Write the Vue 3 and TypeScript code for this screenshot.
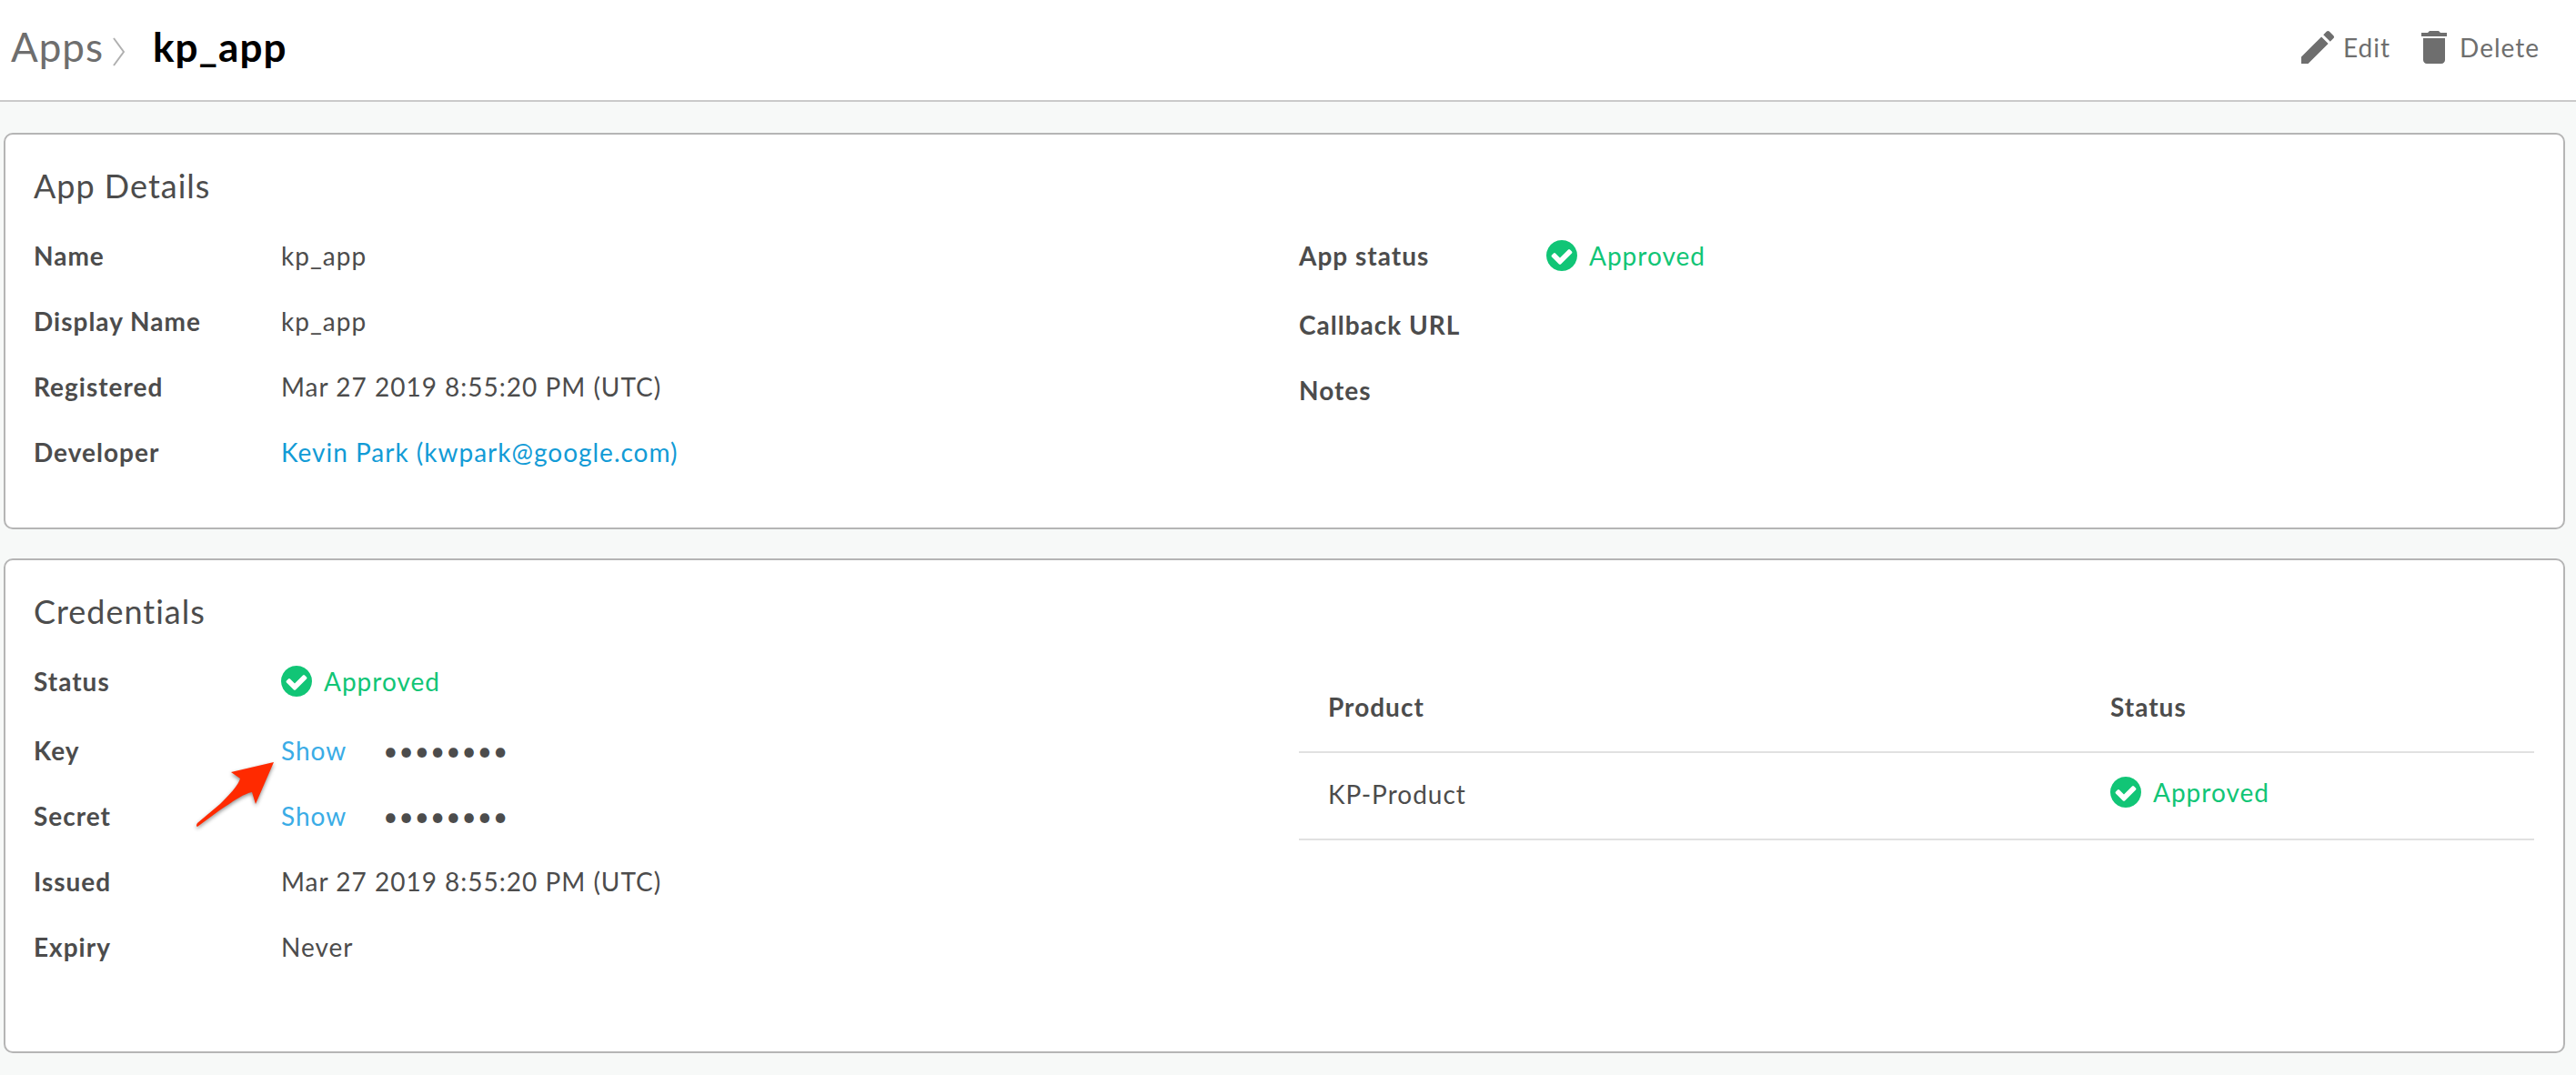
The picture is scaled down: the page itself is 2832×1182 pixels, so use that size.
<script setup lang="ts">
type Kind = 'text' | 'link' | 'status' | 'secret'

interface Field {
  label: string
  value?: string
  kind?: Kind
  pointer?: boolean
}

interface Product {
  name: string
  status: string
}

const appName = 'kp_app'

const detailsLeft: Field[] = [
  { label: 'Name', value: 'kp_app' },
  { label: 'Display Name', value: 'kp_app' },
  { label: 'Registered', value: 'Mar 27 2019 8:55:20 PM (UTC)' },
  { label: 'Developer', value: 'Kevin Park (kwpark@google.com)', kind: 'link' },
]

const detailsRight: Field[] = [
  { label: 'App status', value: 'Approved', kind: 'status' },
  { label: 'Callback URL' },
  { label: 'Notes' },
]

const credentials: Field[] = [
  { label: 'Status', value: 'Approved', kind: 'status' },
  { label: 'Key', value: '••••••••', kind: 'secret', pointer: true },
  { label: 'Secret', value: '••••••••', kind: 'secret' },
  { label: 'Issued', value: 'Mar 27 2019 8:55:20 PM (UTC)' },
  { label: 'Expiry', value: 'Never' },
]

const products: Product[] = [{ name: 'KP-Product', status: 'Approved' }]

const cards = [
  { title: 'App Details', columns: [detailsLeft, detailsRight], products: null },
  { title: 'Credentials', columns: [credentials], products },
]

const checkPath =
  'M1284 606q0-28-18-46l-91-90q-19-19-45-19t-45 19l-408 407-226-226q-19-19-45-19t-45 19l-91 90q-18 18-18 46 0 27 18 45l362 362q19 19 45 19 27 0 46-19l543-543q18-18 18-45zm252 162q0 209-103 385.5t-279.5 279.5-385.5 103-385.5-103-279.5-279.5-103-385.5 103-385.5 279.5-279.5 385.5-103 385.5 103 279.5 279.5 103 385.5z'
</script>

<template>
  <div class="page">
    <header class="topbar">
      <nav class="crumbs" aria-label="Breadcrumb">
        <a class="crumb" href="#apps">Apps</a>
        <svg class="chevron" viewBox="0 0 14 32" aria-hidden="true">
          <path d="M1 1 L12 16 L1 31" />
        </svg>
        <h1 class="current">{{ appName }}</h1>
      </nav>
      <div class="actions">
        <button type="button" class="action">
          <svg class="action-icon" viewBox="0 0 24 24" aria-hidden="true">
            <path
              d="M3 17.25V21h3.75L17.81 9.94l-3.75-3.75L3 17.25zM20.71 7.04c.39-.39.39-1.02 0-1.41l-2.34-2.34c-.39-.39-1.02-.39-1.41 0l-1.83 1.83 3.75 3.75 1.83-1.83z"
            />
          </svg>
          <span>Edit</span>
        </button>
        <button type="button" class="action">
          <svg class="action-icon" viewBox="0 0 24 24" aria-hidden="true">
            <path
              d="M6 19c0 1.1.9 2 2 2h8c1.1 0 2-.9 2-2V7H6v12zM19 4h-3.5l-1-1h-5l-1 1H5v2h14V4z"
            />
          </svg>
          <span>Delete</span>
        </button>
      </div>
    </header>

    <main class="content">
      <section v-for="card in cards" :key="card.title" class="card">
        <h2 class="card-title">{{ card.title }}</h2>
        <div class="columns" :class="{ tall: card.products }">
          <dl v-for="(column, i) in card.columns" :key="i" class="fields">
            <div
              v-for="field in column"
              :key="field.label"
              class="field"
              :class="{ roomy: field.kind === 'status' }"
            >
              <dt class="label">{{ field.label }}</dt>
              <dd class="value">
                <span v-if="field.kind === 'status'" class="status">
                  <svg class="check" viewBox="0 0 1536 1536" aria-hidden="true">
                    <path :d="checkPath" />
                  </svg>
                  <span>{{ field.value }}</span>
                </span>
                <a v-else-if="field.kind === 'link'" class="link" href="#developer">{{ field.value }}</a>
                <span v-else-if="field.kind === 'secret'" class="secret">
                  <button type="button" class="show">Show</button>
                  <span>{{ field.value }}</span>
                </span>
                <template v-else>{{ field.value }}</template>
                <svg v-if="field.pointer" class="pointer" viewBox="0 0 94 84" aria-hidden="true">
                  <path
                    d="M86 2 L39 13 L49 20 C47 28 36 39 27 48 L2 69 Q0 72 2 73 L25 56 C38 47 52 37 62 35 L66 48 Z"
                  />
                </svg>
              </dd>
            </div>
          </dl>

          <table v-if="card.products" class="products">
            <thead>
              <tr>
                <th scope="col" class="name-col">Product</th>
                <th scope="col">Status</th>
              </tr>
            </thead>
            <tbody>
              <tr v-for="product in card.products" :key="product.name">
                <td class="name-cell">{{ product.name }}</td>
                <td>
                  <span class="status">
                    <svg class="check" viewBox="0 0 1536 1536" aria-hidden="true">
                      <path :d="checkPath" />
                    </svg>
                    <span>{{ product.status }}</span>
                  </span>
                </td>
              </tr>
            </tbody>
          </table>
        </div>
      </section>
    </main>
  </div>
</template>

<style>
body {
  margin: 0;
  background: #f7f9f8;
}
</style>

<style scoped>
.page {
  min-height: 100vh;
  box-sizing: border-box;
  background: #f7f9f8;
  color: #4c4c4c;
  font-family: Lato, "Liberation Sans", sans-serif;
  font-size: 28px;
  line-height: 36px;
  letter-spacing: 1px;
}

button {
  margin: 0;
  padding: 0;
  border: 0;
  background: none;
  font: inherit;
  letter-spacing: inherit;
  cursor: pointer;
}

.topbar {
  display: flex;
  justify-content: space-between;
  align-items: flex-start;
  padding: 28px 40px 34px 12px;
  border-bottom: 2px solid #cacaca;
  background: #fff;
}

.crumbs {
  display: flex;
  align-items: center;
  font-size: 44px;
  line-height: 46px;
}

.crumb {
  color: #6e6e6e;
  text-decoration: none;
}

.chevron {
  width: 14px;
  height: 32px;
  margin: 12px 30px 0 10px;
  fill: none;
  stroke: #b0b0b0;
  stroke-width: 2;
}

.current {
  margin: 0;
  color: #000;
  font-size: 44px;
  font-weight: 700;
}

.actions {
  display: flex;
  gap: 24px;
}

.action {
  display: flex;
  align-items: center;
  gap: 4px;
  color: #6e6e6e;
}

.action-icon {
  width: 48px;
  height: 48px;
  fill: #6e6e6e;
}

.content {
  display: flex;
  flex-direction: column;
  gap: 32px;
  padding: 34px 12px 20px 4px;
}

.card {
  padding: 34px 32px 29px 31px;
  border: 2px solid #b5b5b5;
  border-radius: 10px;
  background: #fff;
}

.card-title {
  margin: 0 0 37px;
  font-size: 36px;
  font-weight: 400;
  line-height: 44px;
}

.columns {
  display: grid;
  grid-template-columns: 1fr 1fr;
  align-items: start;
  column-gap: 33px;
}

.columns.tall {
  padding-bottom: 32px;
}

.fields {
  margin: 0;
}

.field {
  display: flex;
  padding-bottom: 36px;
}

.field.roomy {
  padding-bottom: 40px;
}

.label {
  width: 272px;
  font-weight: 700;
}

.value {
  position: relative;
  flex: 1;
  margin: 0;
}

.status {
  display: flex;
  align-items: center;
  gap: 13px;
  color: #11c576;
}

.check {
  width: 34px;
  height: 34px;
  fill: #11c576;
}

.link {
  color: #129bd6;
  text-decoration: none;
}

.secret {
  display: flex;
  gap: 40px;
}

.show {
  color: #3aace6;
}

.pointer {
  position: absolute;
  top: 29px;
  left: -94px;
  width: 94px;
  height: 84px;
  fill: #ff2a00;
  filter: drop-shadow(0 2px 2px rgba(0, 0, 0, 0.45));
}

.products {
  width: 100%;
  border-collapse: separate;
  border-spacing: 0;
  table-layout: fixed;
}

.products th,
.products td {
  padding: 25px 32px 33px;
  border-bottom: 2px solid #e1e1e1;
  text-align: left;
  vertical-align: top;
}

.products th {
  padding: 28px 32px 31px;
}

.products .name-col {
  width: 796px;
  font-weight: 700;
}

.products .name-cell {
  padding: 27px 32px 31px;
}
</style>
